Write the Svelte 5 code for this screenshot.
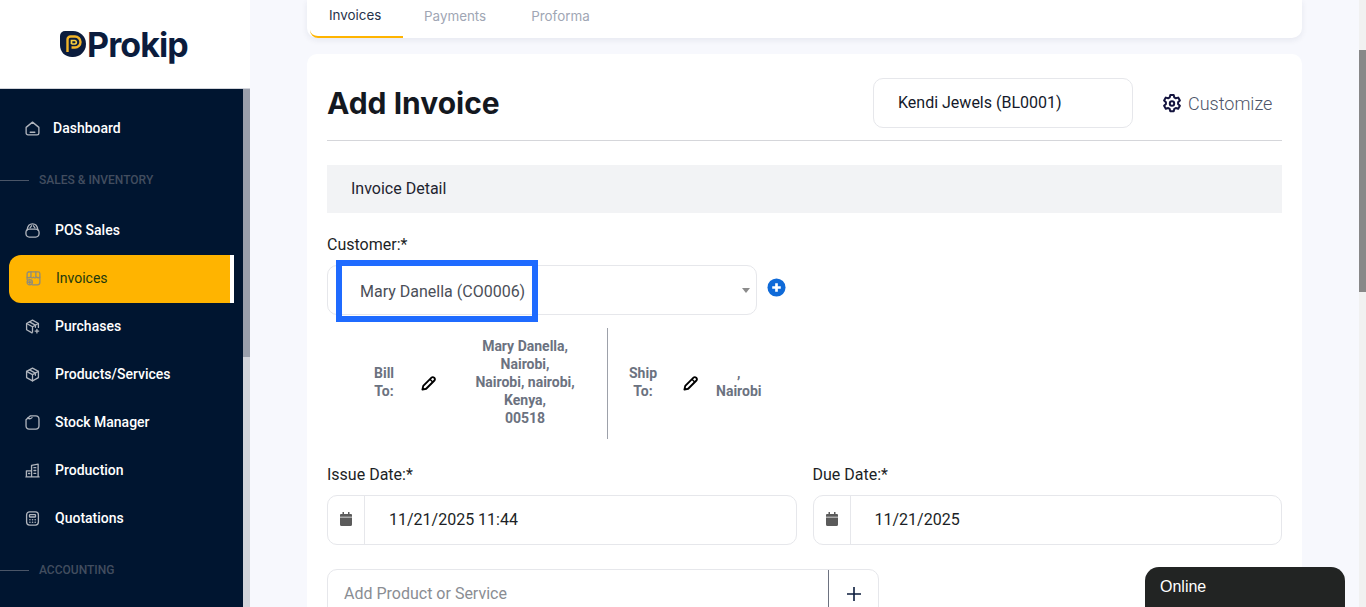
<script>
  const navA = [
    { label: 'POS Sales', icon: 'pos' },
    { label: 'Invoices', icon: 'inv', active: true },
    { label: 'Purchases', icon: 'pur' },
    { label: 'Products/Services', icon: 'pro' },
    { label: 'Stock Manager', icon: 'sto' },
    { label: 'Production', icon: 'prd' },
    { label: 'Quotations', icon: 'quo' }
  ];
</script>

{#snippet icon(name)}
  <svg class="nav-ico" viewBox="0 0 16 16" fill="none" stroke="currentColor" stroke-width="1.4" stroke-linecap="round" stroke-linejoin="round">
    {#if name === 'home'}
      <path d="M1.200 6.800 8 1.200l6.800 5.600v6a2 2 0 0 1-2 2H3.200a2 2 0 0 1-2-2z" /><path d="M5.500 12h5" />
    {:else if name === 'pos'}
      <path d="M1 10a3.500 3.500 0 0 1 3.500-3.500h7A3.500 3.500 0 0 1 15 10v1.500a3.500 3.500 0 0 1-3.500 3.500h-7A3.500 3.500 0 0 1 1 11.500z" /><path d="M2.300 7.300C2.800 3.300 5 1 8 1s5.200 2.300 5.700 6.300" /><path d="M5.500 5 7 3M10.500 5 9 3" />
    {:else if name === 'inv'}
      <path d="M3 1h10a1.800 1.800 0 0 1 1.800 1.800V12a2.800 2.800 0 0 1-2.800 2.800H7" /><path d="M1.200 2.800A1.800 1.800 0 0 1 3 1M1.200 2.800V9" /><path d="M1.200 6.500c1.500 1 2.500 1 3.600 0 1 1 2.200 1 3.200 0 1 1 2.200 1 3.200 0 1.100 1 2.100 1 3.600 0M5.300 1v5.500M10.500 1v5.500" /><circle cx="4" cy="12" r="2.800" /><path d="M4 10.500v3M2.500 12h3" />
    {:else if name === 'pur'}
      <path d="M14.300 9V4.800L8 1.200 1.700 4.800v6.700l5.800 3.300" /><path d="M1.700 4.800 8 8.300l6.300-3.500M8 8.300V14" /><path d="M4.800 3l6.300 3.600v2.200" /><path d="M12.700 11v3.800M10.800 12.900h3.800" />
    {:else if name === 'pro'}
      <path d="M8 1.200 14.300 4.700v6.600L8 14.800l-6.300-3.500V4.700z" /><path d="M1.700 4.700 8 8.100l6.300-3.400M8 8.100v6.700M4.800 3l6.300 3.500v2.300" />
    {:else if name === 'sto'}
      <path d="M5.500 1h6.200a3.200 3.200 0 0 1 3.200 3.200v7.600a3.200 3.200 0 0 1-3.200 3.200H4.300a3.200 3.200 0 0 1-3.200-3.200V5z" /><path d="M3 3.200c1.500 1.200 3.200.8 4.500-.4" />
    {:else if name === 'prd'}
      <path d="M1 14.800h14M1.500 14.800V8.300h5.500v6.500M7 14.800V2.500l7-1.300v13.600" /><path d="M9.500 5h2M9.500 8h2M9.500 11h2M3.800 11.200h1.200" />
    {:else if name === 'quo'}
      <rect x="1.700" y="1" width="12.600" height="14" rx="3.200" /><rect x="4.800" y="3.800" width="6.400" height="2.600" rx=".6" /><path d="M5.200 9.200h.1M8 9.200h.1M10.800 9.200h.1M5.200 12h.1M8 12h.1M10.800 12h.1" stroke-width="1.600" />
    {/if}
  </svg>
{/snippet}

{#snippet pencil()}
  <svg class="pencil" viewBox="0 0 16 16" fill="none" stroke="#000" stroke-width="2" stroke-linejoin="round">
    <path d="M11.200 1.700a1.900 1.900 0 0 1 2.700 0l.4.400a1.900 1.900 0 0 1 0 2.700L5.500 13.600 1.500 14.500l.9-4z" />
    <path d="M9.500 3.500l3 3" stroke-width="1.500" />
  </svg>
{/snippet}

{#snippet calendar()}
  <svg class="cal" viewBox="0 0 12 14" fill="#5b5b5b">
    <path d="M2.500 0h1.500v2h4V0h1.500v2H11a1 1 0 0 1 1 1v1.800H0V3a1 1 0 0 1 1-1h1.500z" />
    <path d="M0 5.600h12V12.500A1.500 1.500 0 0 1 10.500 14h-9A1.500 1.500 0 0 1 0 12.500z" />
  </svg>
{/snippet}

<div class="page">
  <aside class="sidebar">
    <div class="brand">
      <svg class="mark" viewBox="0 0 26 26">
        <path d="M5 0h8a13 13 0 0 1 0 26h-1C5 26 0 21 0 14V5a5 5 0 0 1 5-5z" fill="#0b1c3d" />
        <path d="M7.500 21V8.500A3 3 0 0 1 10.500 5.500H15a5.500 5.500 0 0 1 0 11h-3.500" fill="none" stroke="#f2b429" stroke-width="2.400" />
        <path d="M11.500 13V9.500H15a1.800 1.800 0 0 1 0 3.500h-3.500" fill="none" stroke="#f8cf3f" stroke-width="1.700" />
      </svg>
      <span class="brand-name">Prokip</span>
    </div>
    <div class="nav-wrap">
      <nav class="nav">
        <div class="row dash">
          {@render icon('home')}
          <span>Dashboard</span>
        </div>
        <div class="section"><i></i><span>SALES &amp; INVENTORY</span></div>
        {#each navA as item}
          <div class="row" class:active={item.active}>
            {@render icon(item.icon)}
            <span>{item.label}</span>
          </div>
        {/each}
        <div class="section"><i></i><span>ACCOUNTING</span></div>
      </nav>
      <div class="side-track"><div class="side-thumb"></div></div>
    </div>
  </aside>

  <main class="main">
    <div class="tabs">
      <div class="tab on">Invoices</div>
      <div class="tab t2">Payments</div>
      <div class="tab t3">Proforma</div>
    </div>

    <section class="card">
      <header class="head">
        <h1>Add Invoice</h1>
        <div class="loc">Kendi Jewels (BL0001)</div>
        <div class="custom">
          <svg class="gear" viewBox="0 0 20 20" fill="none" stroke="#14143f" stroke-width="2" stroke-linejoin="round">
            <path d="M8.300 1.500h3.400l.6 2.400 1.500.9 2.400-.7 1.700 3-1.800 1.700v1.700l1.800 1.700-1.700 3-2.400-.7-1.500.9-.6 2.400H8.300l-.6-2.400-1.500-.9-2.400.7-1.700-3 1.800-1.700V8.800L2.100 7.100l1.700-3 2.400.7 1.500-.9z" />
            <circle cx="10" cy="10" r="2.200" />
          </svg>
          <span>Customize</span>
        </div>
      </header>

      <div class="band"><span>Invoice Detail</span></div>

      <label class="lbl cust-lbl" for="cust">Customer:*</label>
      <div class="cust-row">
        <div class="select" id="cust">
          <span>Mary Danella (CO0006)</span>
          <b class="caret"></b>
          <div class="highlight"></div>
        </div>
        <svg class="add" viewBox="0 0 20 20">
          <circle cx="10" cy="10" r="9.500" fill="#0f6ad8" />
          <path d="M10 5.500v9M5.500 10h9" stroke="#fff" stroke-width="2.800" />
        </svg>
      </div>

      <div class="addr">
        <div class="addr-l">
          <div class="to bill">Bill<br />To:</div>
          {@render pencil()}
          <div class="val v1">Mary Danella,<br />Nairobi,<br />Nairobi, nairobi,<br />Kenya,<br />00518</div>
        </div>
        <div class="addr-r">
          <div class="to ship">Ship<br />To:</div>
          {@render pencil()}
          <div class="val v2">,<br />Nairobi</div>
        </div>
      </div>

      <div class="dates">
        <div class="date">
          <div class="lbl">Issue Date:*</div>
          <div class="dinput">
            <div class="addon">{@render calendar()}</div>
            <div class="dval">11/21/2025 11:44</div>
          </div>
        </div>
        <div class="date">
          <div class="lbl">Due Date:*</div>
          <div class="dinput">
            <div class="addon">{@render calendar()}</div>
            <div class="dval">11/21/2025</div>
          </div>
        </div>
      </div>

      <div class="product">
        <div class="ph">Add Product or Service</div>
        <div class="pplus">
          <svg viewBox="0 0 14 14" width="14" height="14"><path d="M7 0v14M0 7h14" stroke="#0b1c3d" stroke-width="1.600" /></svg>
        </div>
      </div>
    </section>
  </main>

  <div class="scrollbar"><div class="thumb"></div></div>
  <div class="chat">Online</div>
</div>

<style>
  :global(body) { margin: 0; overflow: hidden; }
  .page {
    position: relative;
    display: flex;
    width: 1366px;
    height: 607px;
    overflow: hidden;
    background: #f7f8fd;
    font-family: Roboto, "Liberation Sans", sans-serif;
    color: #1c2230;
  }
  .sidebar { width: 250px; flex: none; display: flex; flex-direction: column; }
  .brand {
    height: 88px;
    background: #fff;
    border-bottom: 1px solid #d2d4da;
    display: flex;
    align-items: center;
    padding-left: 60px;
    gap: 1px;
  }
  .mark { width: 26px; height: 26px; margin-top: -1px; }
  .brand-name {
    font-family: Inter, sans-serif;
    font-weight: 700;
    font-size: 34px;
    letter-spacing: -0.9px;
    color: #0b1c3d;
    line-height: 1;
    margin-top: 1px;
  }
  .nav-wrap { flex: 1; display: flex; background: #001530; min-height: 0; }
  .nav { flex: 1; padding-top: 15px; padding-right: 9px; }
  .side-track { width: 7px; background: #d2d4da; }
  .side-thumb { height: 268px; background: #9a9fab; }
  .row {
    height: 48px;
    display: flex;
    align-items: center;
    padding-left: 25px;
    gap: 15px;
    font-size: 14px;
    font-weight: 500;
    color: #fff;
    box-sizing: border-box;
  }
  .row.dash { gap: 13px; }
  .row.dash span { margin-top: -1px; }
  .nav-ico { width: 15px; height: 15px; color: #b0b5bd; flex: none; }
  .row.active {
    margin: 1px 0 -1px 9px;
    padding-left: 17px;
    padding-bottom: 2px;
    width: 225px;
    background: #ffb400;
    border-right: 4px solid #fff;
    border-radius: 12px 0 0 12px;
    color: #1d3a0e;
    font-weight: 400;
    gap: 15px;
  }
  .row.active .nav-ico { color: #8f8c7a; }
  .section {
    height: 54px;
    display: flex;
    align-items: center;
    gap: 10px;
    font-size: 12px;
    font-weight: 500;
    color: #424d5f;
    padding-top: 2px;
    box-sizing: border-box;
  }
  .section i { width: 29px; height: 1px; background: #4a5567; }

  .main { flex: 1; padding: 0 57px; min-width: 0; }
  .tabs {
    height: 38px;
    background: #fff;
    border-radius: 0 0 10px 10px;
    box-shadow: 0 2px 6px rgba(30, 40, 80, .08);
    display: flex;
    font-family: Inter, sans-serif;
    font-size: 13.4px;
    color: #a0a6b4;
  }
  .tab { display: flex; align-items: center; height: 100%; box-sizing: border-box; padding-bottom: 6px; }
  .tab.on {
    width: 93px;
    padding-left: 19px;
    margin-left: 3px;
    padding-bottom: 6px;
    color: #27324a;
    border-bottom: 2px solid #ffb400;
    border-radius: 0 0 0 8px;
  }
  .tab.t2 { margin-left: 21px; }
  .tab.t3 { margin-left: 45px; }
  .card {
    margin-top: 16px;
    background: #fff;
    border-radius: 10px 10px 0 0;
    padding: 0 20px;
    height: 560px;
    box-sizing: border-box;
  }
  .head {
    height: 87px;
    border-bottom: 1px solid #d5d6da;
    box-sizing: border-box;
    display: flex;
    align-items: center;
    padding-top: 11px;
  }
  h1 {
    margin: 0;
    font-family: Inter, sans-serif;
    font-size: 30px;
    font-weight: 700;
    color: #14181f;
    margin-right: auto;
  }
  .loc {
    width: 260px;
    height: 50px;
    border: 1px solid #e6e7eb;
    border-radius: 10px;
    box-sizing: border-box;
    padding-left: 24px;
    padding-bottom: 1px;
    display: flex;
    align-items: center;
    font-size: 16px;
    color: #14192a;
  }
  .custom {
    width: 149px;
    display: flex;
    align-items: center;
    font-size: 18px;
    font-weight: 300;
    color: #4d5468;
    padding-left: 29px;
    box-sizing: border-box;
    gap: 6px;
    margin-top: 2px;
  }
  .gear { width: 20px; height: 21px; flex: none; }
  .band {
    margin-top: 24px;
    height: 48px;
    background: #f2f3f5;
    display: flex;
    align-items: center;
    padding: 0 0 2px 24px;
    box-sizing: border-box;
    font-size: 16px;
    color: #1f2430;
  }
  .lbl { font-size: 16px; line-height: 20px; color: #1c1f26; display: block; }
  .cust-lbl { margin-top: 22px; }
  .cust-row { margin-top: 10px; display: flex; align-items: center; gap: 10px; }
  .select {
    position: relative;
    width: 430px;
    height: 50px;
    border: 1px solid #e6e7eb;
    border-radius: 10px;
    box-sizing: border-box;
    display: flex;
    align-items: center;
    padding: 2px 0 0 32px;
    font-size: 16px;
    color: #4b4f58;
  }
  .caret {
    position: absolute;
    right: 6px;
    top: 22px;
    border-left: 4px solid transparent;
    border-right: 4px solid transparent;
    border-top: 5px solid #8b8b8b;
  }
  .highlight {
    position: absolute;
    left: 8px;
    top: -6px;
    width: 202px;
    height: 62px;
    border: 6px solid #1f6bff;
    box-sizing: border-box;
  }
  .add { width: 19px; height: 19px; margin-top: -5px; }
  .addr {
    margin-top: 13px;
    height: 111px;
    display: flex;
    font-size: 14px;
    font-weight: 700;
    line-height: 18px;
    color: #6b7280;
    text-align: center;
  }
  .addr-l, .addr-r { display: flex; align-items: center; height: 100%; padding-bottom: 4px; box-sizing: border-box; }
  .addr-l { width: 281px; border-right: 1px solid #9da1aa; }
  .addr-r { flex: 1; }
  .pencil { width: 15px; height: 15px; flex: none; }
  .bill { margin-left: 47px; }
  .addr-l .pencil { margin-left: 27px; margin-top: 3px; }
  .v1 { margin-left: 29px; width: 120px; flex: none; }
  .ship { margin-left: 21px; }
  .addr-r .pencil { margin-left: 26px; margin-top: 3px; }
  .v2 { margin-left: 18px; margin-top: 0; }
  .dates { margin-top: 26px; display: flex; gap: 16px; }
  .date { flex: 1; min-width: 0; }
  .dinput {
    margin-top: 10px;
    height: 50px;
    border: 1px solid #e6e7eb;
    border-radius: 10px;
    box-sizing: border-box;
    display: flex;
    align-items: center;
  }
  .addon {
    width: 36px;
    height: 100%;
    border-right: 1px solid #e6e7eb;
    display: flex;
    align-items: center;
    justify-content: center;
    flex: none;
  }
  .cal { width: 12px; height: 14px; margin-top: -2px; }
  .dval { padding: 0 0 2px 24px; font-size: 16px; color: #1c1f26; }
  .product {
    margin-top: 24px;
    width: 552px;
    height: 50px;
    border: 1px solid #e6e7eb;
    border-radius: 10px;
    box-sizing: border-box;
    display: flex;
    align-items: center;
  }
  .ph { flex: 1; padding: 0 0 2px 16px; box-sizing: border-box; font-size: 16px; color: #8a8d93; height: 100%; display: flex; align-items: center; }
  .pplus {
    width: 50px;
    height: 100%;
    box-sizing: border-box;
    padding-left: 1px;
    border-left: 1px solid #6d7280;
    display: flex;
    align-items: center;
    justify-content: center;
    flex: none;
  }
  .scrollbar { width: 7px; flex: none; background: #f1f1f1; }
  .thumb { height: 242px; margin-top: 50px; background: #888; }
  .chat {
    position: absolute;
    left: 1145px;
    top: 567px;
    width: 200px;
    height: 40px;
    box-sizing: border-box;
    padding: 11px 15px 0;
    background: #222423;
    border-radius: 14px 14px 0 0;
    color: #fff;
    font-family: "Liberation Sans", sans-serif;
    font-size: 16px;
    line-height: 18px;
  }
</style>
